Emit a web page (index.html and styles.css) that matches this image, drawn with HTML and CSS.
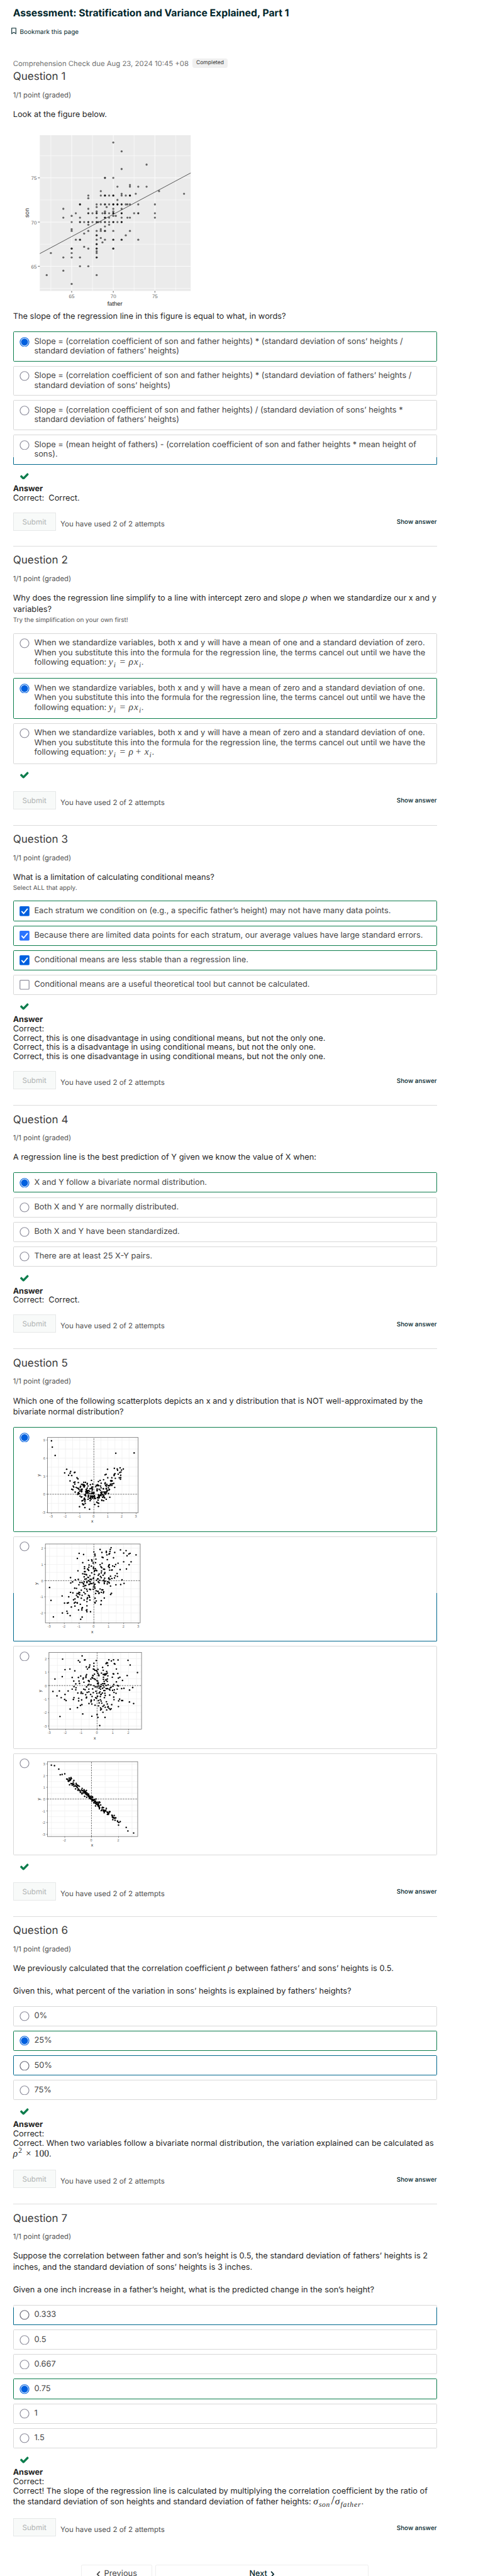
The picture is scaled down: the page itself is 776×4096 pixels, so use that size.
FILE: index.html
```html
<!DOCTYPE html>
<html lang="en">
<head>
<meta charset="utf-8">
<title>Assessment: Stratification and Variance Explained, Part 1</title>
<link rel="stylesheet" href="styles.css">
</head>
<body>
<svg class="defs" aria-hidden="true">
  <symbol id="radio" viewBox="0 0 28 28"><circle cx="14" cy="14" r="12.6" fill="#fff" stroke="currentColor" stroke-width="2.1"/></symbol>
  <symbol id="radio-on" viewBox="0 0 28 28"><circle cx="14" cy="14" r="12.7" fill="#fff" stroke="#0060df" stroke-width="2.1"/><circle cx="14" cy="14" r="10" fill="#0060df"/></symbol>
  <symbol id="box" viewBox="0 0 28 28"><rect x="1.1" y="1.1" width="25.8" height="25.8" rx="2.5" fill="#fff" stroke="#8f8f9d" stroke-width="2.2"/></symbol>
  <symbol id="box-on" viewBox="0 0 28 28"><rect width="28" height="28" rx="3" fill="currentColor"/><path d="M6.5 15l5 5.5L22 8" fill="none" stroke="#fff" stroke-width="3.4" stroke-linecap="round" stroke-linejoin="round"/></symbol>
  <symbol id="tick" viewBox="121 298 1550 1224"><path fill="currentColor" d="M1671 566q0 40-28 68l-724 724-136 136q-28 28-68 28t-68-28l-136-136-362-362q-28-28-28-68t28-68l136-136q28-28 68-28t68 28l294 295 656-657q28-28 68-28t68 28l136 136q28 28 28 68z"/></symbol>
</svg>

<main class="page">
  <header class="head">
    <h1 class="head__title">Assessment: Stratification and Variance Explained, Part 1</h1>
    <div class="bookmark">
      <svg class="bookmark__icon" viewBox="0 0 14 18"><path d="M1.2 1.2h11.6v15.2L7 12.6l-5.8 3.8z" fill="none" stroke="currentColor" stroke-width="1.9"/></svg>
      <span>Bookmark this page</span>
    </div>
    <div class="due"><span class="due__text">Comprehension Check due Aug 23, 2024 10:45 +08</span><span class="badge">Completed</span></div>
  </header>

  <section class="question question--first">
    <h2 class="question__title">Question 1</h2>
    <p class="points">1/1 point (graded)</p>
    <p class="prompt">Look at the figure below.</p>
    <svg class="figure" id="figure-heights" viewBox="50 370 500 490"></svg>
    <p class="prompt">The slope of the regression line in this figure is equal to what, in words?</p>
    <div class="options">
      <div class="option option--correct"><svg class="mark"><use href="#radio-on"/></svg><p>Slope = (correlation coefficient of son and father heights) * (standard deviation of sons’ heights /<br>standard deviation of fathers’ heights)</p></div>
      <div class="option"><svg class="mark"><use href="#radio"/></svg><p>Slope = (correlation coefficient of son and father heights) * (standard deviation of fathers’ heights /<br>standard deviation of sons’ heights)</p></div>
      <div class="option"><svg class="mark"><use href="#radio"/></svg><p>Slope = (correlation coefficient of son and father heights) / (standard deviation of sons’ heights *<br>standard deviation of fathers’ heights)</p></div>
      <div class="option option--trace trace-low"><svg class="mark"><use href="#radio"/></svg><p>Slope = (mean height of fathers) - (correlation coefficient of son and father heights * mean height of<br>sons).</p></div>
    </div>
    <svg class="status"><use href="#tick"/></svg>
    <div class="answer"><b>Answer</b><p>Correct:&nbsp; Correct.</p></div>
    <div class="actions"><span class="submit">Submit</span><span class="attempts">You have used 2 of 2 attempts</span><span class="show">Show answer</span></div>
  </section>

  <section class="question">
    <h2 class="question__title">Question 2</h2>
    <p class="points">1/1 point (graded)</p>
    <p class="prompt">Why does the regression line simplify to a line with intercept zero and slope <span class="math"><i>ρ</i></span> when we standardize our x and y<br>variables?</p>
    <p class="hint">Try the simplification on your own first!</p>
    <div class="options">
      <div class="option option--tall"><svg class="mark"><use href="#radio"/></svg><p>When we standardize variables, both x and y will have a mean of one and a standard deviation of zero.<br>When you substitute this into the formula for the regression line, the terms cancel out until we have the<br>following equation: <span class="math"><i>y</i><sub>i</sub><span class="op">=</span><i>ρx</i><sub>i</sub></span>.</p></div>
      <div class="option option--tall option--correct"><svg class="mark"><use href="#radio-on"/></svg><p>When we standardize variables, both x and y will have a mean of zero and a standard deviation of one.<br>When you substitute this into the formula for the regression line, the terms cancel out until we have the<br>following equation: <span class="math"><i>y</i><sub>i</sub><span class="op">=</span><i>ρx</i><sub>i</sub></span>.</p></div>
      <div class="option option--tall"><svg class="mark"><use href="#radio"/></svg><p>When we standardize variables, both x and y will have a mean of zero and a standard deviation of one.<br>When you substitute this into the formula for the regression line, the terms cancel out until we have the<br>following equation: <span class="math"><i>y</i><sub>i</sub><span class="op">=</span><i>ρ</i><span class="op op--plus">+</span><i>x</i><sub>i</sub></span>.</p></div>
    </div>
    <svg class="status"><use href="#tick"/></svg>
    <div class="actions actions--tight"><span class="submit">Submit</span><span class="attempts">You have used 2 of 2 attempts</span><span class="show">Show answer</span></div>
  </section>

  <section class="question">
    <h2 class="question__title">Question 3</h2>
    <p class="points">1/1 point (graded)</p>
    <p class="prompt">What is a limitation of calculating conditional means?</p>
    <p class="hint">Select ALL that apply.</p>
    <div class="options">
      <div class="option option--correct"><svg class="mark mark--box"><use href="#box-on"/></svg><p>Each stratum we condition on (e.g., a specific father’s height) may not have many data points.</p></div>
      <div class="option option--correct"><svg class="mark mark--box mark--hover"><use href="#box-on"/></svg><p>Because there are limited data points for each stratum, our average values have large standard errors.</p></div>
      <div class="option option--correct"><svg class="mark mark--box"><use href="#box-on"/></svg><p>Conditional means are less stable than a regression line.</p></div>
      <div class="option"><svg class="mark"><use href="#box"/></svg><p>Conditional means are a useful theoretical tool but cannot be calculated.</p></div>
    </div>
    <svg class="status"><use href="#tick"/></svg>
    <div class="answer"><b>Answer</b><p>Correct:<br>Correct, this is one disadvantage in using conditional means, but not the only one.<br>Correct, this is a disadvantage in using conditional means, but not the only one.<br>Correct, this is one disadvantage in using conditional means, but not the only one.</p></div>
    <div class="actions"><span class="submit">Submit</span><span class="attempts">You have used 2 of 2 attempts</span><span class="show">Show answer</span></div>
  </section>

  <section class="question">
    <h2 class="question__title">Question 4</h2>
    <p class="points">1/1 point (graded)</p>
    <p class="prompt">A regression line is the best prediction of Y given we know the value of X when:</p>
    <div class="options">
      <div class="option option--correct"><svg class="mark"><use href="#radio-on"/></svg><p>X and Y follow a bivariate normal distribution.</p></div>
      <div class="option"><svg class="mark"><use href="#radio"/></svg><p>Both X and Y are normally distributed.</p></div>
      <div class="option"><svg class="mark"><use href="#radio"/></svg><p>Both X and Y have been standardized.</p></div>
      <div class="option"><svg class="mark"><use href="#radio"/></svg><p>There are at least 25 X-Y pairs.</p></div>
    </div>
    <svg class="status"><use href="#tick"/></svg>
    <div class="answer"><b>Answer</b><p>Correct:&nbsp; Correct.</p></div>
    <div class="actions"><span class="submit">Submit</span><span class="attempts">You have used 2 of 2 attempts</span><span class="show">Show answer</span></div>
  </section>

  <section class="question">
    <h2 class="question__title">Question 5</h2>
    <p class="points">1/1 point (graded)</p>
    <p class="prompt">Which one of the following scatterplots depicts an x and y distribution that is NOT well-approximated by the<br>bivariate normal distribution?</p>
    <div class="options">
      <div class="option option--plot option--correct plot-a"><svg class="mark"><use href="#radio-on"/></svg><svg class="plot" id="plot-a" viewBox="0 0 320 260"></svg></div>
      <div class="option option--plot option--trace trace-mid plot-b"><svg class="mark"><use href="#radio"/></svg><svg class="plot" id="plot-b" viewBox="0 290 320 280"></svg></div>
      <div class="option option--plot plot-c"><svg class="mark"><use href="#radio"/></svg><svg class="plot" id="plot-c" viewBox="0 0 320 260"></svg></div>
      <div class="option option--plot plot-d"><svg class="mark"><use href="#radio"/></svg><svg class="plot" id="plot-d" viewBox="0 300 320 260"></svg></div>
    </div>
    <svg class="status"><use href="#tick"/></svg>
    <div class="actions actions--tight"><span class="submit">Submit</span><span class="attempts">You have used 2 of 2 attempts</span><span class="show">Show answer</span></div>
  </section>

  <section class="question">
    <h2 class="question__title">Question 6</h2>
    <p class="points">1/1 point (graded)</p>
    <p class="prompt">We previously calculated that the correlation coefficient <span class="math"><i>ρ</i></span> between fathers’ and sons’ heights is 0.5.<br><br>Given this, what percent of the variation in sons’ heights is explained by fathers’ heights?</p>
    <div class="options">
      <div class="option"><svg class="mark"><use href="#radio"/></svg><p>0%</p></div>
      <div class="option option--correct"><svg class="mark"><use href="#radio-on"/></svg><p>25%</p></div>
      <div class="option option--hover"><svg class="mark"><use href="#radio"/></svg><p>50%</p></div>
      <div class="option"><svg class="mark"><use href="#radio"/></svg><p>75%</p></div>
    </div>
    <svg class="status"><use href="#tick"/></svg>
    <div class="answer"><b>Answer</b><p>Correct:<br>Correct. When two variables follow a bivariate normal distribution, the variation explained can be calculated as</p><p class="formula"><span class="math"><i>ρ</i><sup>2</sup><span class="op">×</span>100</span>.</p></div>
    <div class="actions"><span class="submit">Submit</span><span class="attempts">You have used 2 of 2 attempts</span><span class="show">Show answer</span></div>
  </section>

  <section class="question">
    <h2 class="question__title">Question 7</h2>
    <p class="points">1/1 point (graded)</p>
    <p class="prompt">Suppose the correlation between father and son’s height is 0.5, the standard deviation of fathers’ heights is 2<br>inches, and the standard deviation of sons’ heights is 3 inches.<br><br>Given a one inch increase in a father’s height, what is the predicted change in the son’s height?</p>
    <div class="options">
      <div class="option option--trace trace-high"><svg class="mark mark--dark"><use href="#radio"/></svg><p>0.333</p></div>
      <div class="option"><svg class="mark"><use href="#radio"/></svg><p>0.5</p></div>
      <div class="option"><svg class="mark"><use href="#radio"/></svg><p>0.667</p></div>
      <div class="option option--correct"><svg class="mark"><use href="#radio-on"/></svg><p>0.75</p></div>
      <div class="option"><svg class="mark"><use href="#radio"/></svg><p>1</p></div>
      <div class="option"><svg class="mark"><use href="#radio"/></svg><p>1.5</p></div>
    </div>
    <svg class="status"><use href="#tick"/></svg>
    <div class="answer"><b>Answer</b><p>Correct:<br>Correct! The slope of the regression line is calculated by multiplying the correlation coefficient by the ratio of</p><p class="formula formula--sigma">the standard deviation of son heights and standard deviation of father heights: <span class="math"><i>σ</i><sub>son</sub><span class="slash">/</span><i>σ</i><sub class="wide">father</sub></span>.</p></div>
    <div class="actions"><span class="submit">Submit</span><span class="attempts">You have used 2 of 2 attempts</span><span class="show">Show answer</span></div>
  </section>

  <nav class="pager">
    <span class="pager__item pager__item--prev"><svg class="chevron" viewBox="0 0 12 18"><path d="M10 1.5L3 9l7 7.5" fill="none" stroke="currentColor" stroke-width="3"/></svg>Previous</span>
    <span class="pager__item pager__item--next">Next<svg class="chevron" viewBox="0 0 12 18"><path d="M2 1.5L9 9l-7 7.5" fill="none" stroke="currentColor" stroke-width="3"/></svg></span>
  </nav>
</main>
<script src="charts.js"></script>
</body>
</html>
```
FILE: styles.css
```css
html {
  font-size: 5.7135px;
}

* {
  box-sizing: border-box;
}

body {
  margin: 0;
  width: 776px;
  height: 4096px;
  overflow: hidden;
  background: #fff;
  color: #1f1f1f;
  font-family: Inter, "Liberation Sans", sans-serif;
  font-size: 2.246rem;
  text-rendering: geometricPrecision;
}

h1, h2, p {
  margin: 0;
  font-weight: 400;
}

p, .due, .actions, .bookmark {
  white-space: nowrap;
}

.defs {
  display: block;
  width: 0;
  height: 0;
}

.page {
  margin-left: 3.62rem;
  width: 117.95rem;
}

.head__title {
  padding-top: 1.76rem;
  line-height: 4rem;
  font-size: 2.755rem;
  font-weight: 700;
  color: #00262b;
}

.bookmark {
  display: flex;
  align-items: center;
  gap: 0.9rem;
  height: 3rem;
  margin: 1.6rem 0 0 -0.4rem;
  font-size: 1.742rem;
  color: #00262b;
}

.bookmark__icon {
  width: 1.4rem;
  height: 1.85rem;
  margin-top: -0.3rem;
}

.due {
  display: flex;
  align-items: center;
  gap: 1rem;
  height: 3rem;
  margin-top: 5.75rem;
  font-size: 1.988rem;
  color: #707070;
}

.badge {
  width: 9.9rem;
  height: 2.5rem;
  border-radius: 0.6rem;
  background: #f0f0f0;
  color: #333;
  text-align: center;
  font-size: 1.496rem;
  line-height: 2.5rem;
}

.question {
  border-top: 1px solid #dcdcdc;
  padding-top: 2rem;
  padding-bottom: 4.35rem;
}

.question--first {
  border-top: 0;
  padding-top: 0.3rem;
  padding-bottom: 4.17rem;
}

.question__title {
  height: 4rem;
  line-height: 4rem;
  font-size: 2.98rem;
  color: #3c3c3c;
}

.points {
  margin-top: 1.55rem;
  line-height: 3rem;
  font-size: 1.98rem;
  color: #555;
}

.prompt {
  margin-top: 2.45rem;
  line-height: 3.13rem;
}

.figure {
  display: block;
  width: 50rem;
  height: 49rem;
  margin-left: 1.38rem;
  margin-top: 3.46rem;
}

.figure + .prompt {
  margin-top: 0.7rem;
}

.hint {
  line-height: 2.6rem;
  font-size: 1.743rem;
  color: #555;
}

.options {
  display: flex;
  flex-direction: column;
  gap: 1.24rem;
  margin-top: 2.45rem;
}

.hint + .options {
  margin-top: 2.25rem;
}

.option {
  position: relative;
  display: flex;
  align-items: flex-start;
  padding: 1.3rem 0 1.22rem 1.6rem;
  border: 1px solid #d8d8d8;
  border-radius: 0.3rem;
  color: #454545;
  line-height: 2.73rem;
}

.option--tall {
  height: 11.3rem;
  line-height: 2.7rem;
}

.option--correct {
  border-color: #0d7d4d;
}

.option--hover {
  border-color: #00688d;
}

.option--trace::after {
  content: "";
  position: absolute;
  left: -1px;
  right: -1px;
  bottom: -1px;
  border: 1px solid #00688d;
  border-top: 0;
  border-radius: 0 0 0.3rem 0.3rem;
}

.trace-low::after {
  height: 1.8rem;
}

.trace-mid::after {
  height: 13.3rem;
}

.trace-high::after {
  height: 4.8rem;
}

.mark {
  flex: none;
  width: 2.8rem;
  height: 2.75rem;
  margin-right: 1.33rem;
  color: #8f8f9d;
}

.option--hover .mark,
.mark--dark {
  color: #6a6a78;
}

.mark--box {
  color: #0060df;
}

.mark--hover {
  color: #2b74ff;
}

.plot {
  flex: none;
  width: 32rem;
  height: 26rem;
  margin-left: -0.53rem;
}

.plot-a { height: 29.1rem; }
.plot-b { height: 29.3rem; }
.plot-c { height: 28.66rem; }
.plot-d { height: 28.35rem; }
.plot-a .plot { margin-top: 0.25rem; }
.plot-b .plot { height: 28rem; margin-top: -1.1rem; }
.plot-c .plot { margin-top: -0.65rem; }
.plot-d .plot { margin-top: -0.55rem; }

.status {
  display: block;
  width: 2.4rem;
  height: 1.9rem;
  margin: 2.25rem 0 1.55rem 2rem;
  color: #0d7d4d;
}

.answer {
  line-height: 2.62rem;
}

.answer b {
  display: block;
  font-size: 2.207rem;
  font-weight: 700;
}

.formula {
  height: 3.4rem;
  line-height: 3.3rem;
}

.formula--sigma {
  height: 3.5rem;
  line-height: 3rem;
}

.actions {
  display: flex;
  align-items: center;
  height: 5.1rem;
  margin-top: 2.43rem;
}

.actions--tight {
  margin-top: 3.4rem;
}

.submit {
  width: 11.9rem;
  height: 5.1rem;
  border: 1px solid #e6e8e8;
  background: #f8faf9;
  color: #b0b3b3;
  text-align: center;
  font-size: 2.04rem;
  line-height: 5rem;
}

.attempts {
  margin: 1.2rem 0 0 1.3rem;
  font-size: 2.024rem;
  color: #4f4f4f;
}

.show {
  margin-left: auto;
  padding-top: 0.3rem;
  font-size: 1.74rem;
  font-weight: 500;
  color: #00262b;
}

.math {
  font-family: "Liberation Serif", serif;
  font-size: 2.7rem;
  line-height: 1rem;
}

.math i {
  letter-spacing: 0.2rem;
}

.math sub,
.math sup {
  font-size: 0.75em;
  font-style: italic;
  letter-spacing: 0.1rem;
  line-height: 0;
}

.math sup {
  font-style: normal;
  letter-spacing: 0;
}

.math .wide {
  letter-spacing: 0.16rem;
}

.op {
  margin: 0 0.9rem 0 1.05rem;
}

.op--plus {
  margin: 0 0.9rem 0 0.5rem;
}

.slash {
  margin: 0 0.1rem 0 0.3rem;
  font-size: 1.3em;
  line-height: 0;
}

.pager {
  display: flex;
  gap: 1rem;
  margin: 3.4rem 0 0 19rem;
}

.pager__item {
  display: flex;
  justify-content: center;
  align-items: center;
  gap: 1rem;
  height: 5.4rem;
  border: 1px solid #eee;
  border-radius: 0.4rem;
  color: #454545;
}

.pager__item--prev {
  width: 19.7rem;
}

.pager__item--next {
  width: 59.3rem;
  color: #00262b;
  font-size: 2.207rem;
  font-weight: 500;
}

.chevron {
  width: 1.2rem;
  height: 1.8rem;
}
```
FILE: charts.js
```js
const NS = "http://www.w3.org/2000/svg";

function add(parent, tag, attrs, text) {
  const el = document.createElementNS(NS, tag);
  for (const key in attrs) el.setAttribute(key, attrs[key]);
  if (text !== undefined) el.textContent = text;
  parent.appendChild(el);
}

function label(parent, x, y, text, size, fill, anchor, rotate) {
  const attrs = { x, y, "font-size": size, fill, "text-anchor": anchor, "font-family": "Liberation Sans, Arial, sans-serif" };
  if (rotate) attrs.transform = `rotate(-90 ${x} ${y})`;
  add(parent, "text", attrs, text);
}

const pairs = (s) => s.trim().split(/\s+/).map((p) => p.split(",").map(Number));

/* Father and son heights; a third value is the number of families at that point. */
const heights = pairs(`
70,79 71,78 74,76.5 71,76 69,75,2 70,75 72,74.2 72,74 70.5,74 73,74 74,74 68.5,73.5 75.5,73.5
71,73.2 72.7,73.2 78.5,73.2 67,73 68.5,73 69,73,3 69.5,73 70,73,3 71,73 71.5,73 72,73,3 67,72.7
70.5,72.5 66,72,3 68,72 68.5,72 69,72,2 69.5,72 70,72,4 70.5,72,3 71,72,2 71.5,72 71.7,72 72,72
73,72 75,72 68,71.7 69.2,71.7 64,71.5 67,71.5 70,71.5 71,71.5 68,71.2 69,71.2 70,71.2 65.5,71
67,71,2 67.5,71 68,71,2 68.7,71 69,71,2 69.5,71 70,71,4 71,71,3 72.5,71 73,71,2 75,71 65,70.7
70,70.7 70.3,70.7 64,70.5 66,70.5 68,70.5 69,70.5,3 69.5,70.5 71,70.5 71.7,70.5 72,70.5 75,70.5
65,70 66,70,2 66.5,70 67,70,2 67.5,70 68,70,2 68.2,70 68.5,70 69,70,2 69.5,70 70,70,3 70.5,70
71,70,3 67,69.7 69.5,69.7 69,69.5 65,69.2 68.5,69.2 65,69 67,69 68,69 68.5,69 69,69,2 70,69 72,69
66.5,68.7 68,68.5,2 71.5,68.5 68.5,68.2 65.5,68 66,68,2 68,68 69,68 70,68,2 71,68,2 73,68 68.7,67.7
68,67.5,2 66.5,67.2 65,67,2 67,67 68,67,2 70,67,2 68,66.7 62.5,66.5 65,66.5 68,66.5 64,66 65,66
66,66 68,66,2 66,65 67,65 64,64.5 62,64 68,64 65,63`);

(function drawHeights() {
  const svg = document.getElementById("figure-heights");
  const X = (v) => 198.7 + (v - 65) * 23.17;
  const Y = (v) => 618.7 - (v - 70) * 24.6;
  add(svg, "rect", { x: 110, y: 377, width: 420, height: 433.5, fill: "#ebebeb" });
  const line = (x1, y1, x2, y2, stroke, w) => add(svg, "line", { x1, y1, x2, y2, stroke, "stroke-width": w });
  [62.5, 65, 67.5, 70, 72.5, 75, 77.5].forEach((v) => line(X(v), 377, X(v), 810.5, "#fff", v % 5 ? 1 : 1.5));
  [62.5, 65, 67.5, 70, 72.5, 75, 77.5].forEach((v) => line(110, Y(v), 530, Y(v), "#fff", v % 5 ? 1 : 1.5));
  heights.forEach(([f, s, n = 1]) =>
    add(svg, "circle", { cx: X(f), cy: Y(s), r: 2.9, fill: "#000", "fill-opacity": 1 - Math.pow(0.42, n) }));
  line(110, 706.5, 530, 482, "#222", 1.3);
  [65, 70, 75].forEach((v) => {
    line(X(v), 810.5, X(v), 815, "#333", 1.4);
    line(105, Y(v), 110, Y(v), "#333", 1.4);
    label(svg, X(v), 831, v, 14, "#666", "middle");
    label(svg, 101.5, Y(v) + 6, v, 14, "#666", "end");
  });
  label(svg, 319, 852, "father", 16.5, "#222", "middle");
  label(svg, 79.5, 593, "son", 16.5, "#222", "middle", true);
})();

const plots = {
  "plot-a": {
    frame: [128, 33, 886, 620], origin: [516, 475], name: [503, 698, 58, 327],
    xt: { "-3": 162, "-2": 279, "-1": 398, 0: 516, 1: 633, 2: 751, 3: 869 },
    yt: { 9: 53, 6: 194, 3: 334, 0: 475, "-3": 617 },
    gx: [220, 338, 457, 575, 692, 810], gy: [123, 264, 405, 546],
    pts: `162,59 169,108 193,173 699,155 852,153 289,280 272,309 322,298 317,311 305,327 331,329 353,306 358,304 375,347 383,355 317,371 630,280 687,273 735,269 711,278 714,288 762,278 747,287 609,324 618,320 732,306 742,302 692,315 686,321 685,329 719,318 740,327 632,347 666,347 695,351 728,347 740,345 738,358 496,367 597,362 568,367 554,376 577,389 656,370 663,369 669,371 661,374 611,386 609,393 350,383 358,380 357,396 386,384 432,382 446,382 461,390 460,397 487,401 506,396 413,398 424,398 430,404 434,402 428,408 440,407 436,413 434,419 467,411 343,411 348,419 368,422 379,427 387,430 392,438 405,413 402,422 331,436 341,440 360,458 536,405 548,400 546,408 532,416 557,408 572,411 576,425 560,436 543,434 543,442 543,449 570,444 594,431 596,434 584,457 583,463 614,406 624,398 620,412 635,408 643,409 652,407 654,397 661,395 672,394 682,390 666,407 637,425 620,429 619,434 646,437 642,442 628,443 626,450 690,422 408,440 415,436 418,436 398,451 411,450 416,450 413,456 388,462 393,470 384,465 381,476 390,472 452,437 455,443 461,427 452,450 459,449 466,447 474,446 448,455 453,457 458,458 463,456 468,461 455,464 461,468 450,466 476,470 481,454 484,432 495,430 504,434 498,420 505,419 502,443 500,458 491,470 500,470 509,465 516,461 517,466 515,471 507,470 444,476 440,481 445,483 448,488 401,490 411,498 415,495 470,484 471,490 469,497 488,488 492,492 497,490 503,488 508,491 513,492 520,486 522,492 517,497 503,497 490,500 480,507 487,506 492,514 467,514 485,525 503,505 518,508 524,504 530,508 438,506 435,510 434,518 444,518 422,524 417,527 441,532 422,550 428,557 431,555 444,547 396,572 441,579 480,592 523,555 540,537 549,543 556,545 554,570 551,521 551,505 560,500 560,502 546,501 553,480 559,482 561,490 556,492 571,480 575,486 577,472 574,460 578,466 585,476 591,481 600,457 612,457 618,460 617,467 604,466 612,474 625,455 638,469 599,483 596,493 589,499 601,497 606,503 619,514 582,520 583,523 597,525 649,499`
  },
  "plot-b": {
    frame: [111, 861, 903, 1476], origin: [516, 1147], name: [503, 1558, 38, 1170],
    xt: { "-3": 146, "-2": 269, "-1": 393, 0: 516, 1: 640, 2: 765, 3: 888 },
    yt: { 2: 894, 1: 1020, 0: 1147, "-1": 1273, "-2": 1399 },
    gx: [208, 331, 455, 578, 703, 826], gy: [957, 1083, 1210, 1336, 1462],
    pts: `660,890 568,904 653,904 620,918 650,920 583,927 620,927 690,927 738,907 785,913 765,932 818,934 808,939 868,946 793,953 648,935 643,941 625,946 393,934 430,943 516,923 525,941 526,953 378,974 585,964 593,967 680,969 628,983 533,979 471,988 498,985 501,994 510,1009 530,1007 423,1007 585,1011 568,1023 765,1000 827,1000 810,1023 718,1011 698,1021 688,1037 673,1032 645,1023 640,1028 638,1037 645,1045 495,1034 476,1025 474,1042 438,1039 438,1053 465,1056 466,1060 473,1067 513,1042 513,1053 528,1053 575,1039 582,1046 580,1072 597,1057 605,1058 735,1061 788,1056 668,1063 665,1065 648,1065 383,1070 438,1077 443,1077 498,1086 523,1068 520,1074 534,1065 540,1069 521,1098 578,1086 608,1084 605,1093 423,1093 438,1096 450,1098 455,1102 483,1109 435,1117 466,1120 470,1122 553,1105 560,1095 593,1105 571,1114 578,1123 710,1091 695,1109 713,1114 655,1112 688,1126 666,1130 641,1125 640,1132 650,1137 606,1128 321,1123 361,1140 386,1137 338,1156 323,1165 400,1161 441,1135 453,1133 485,1137 495,1137 511,1130 513,1126 538,1144 548,1133 551,1133 565,1144 470,1147 475,1149 458,1156 458,1162 435,1156 417,1161 428,1170 431,1175 485,1156 513,1165 490,1170 500,1170 480,1174 475,1177 553,1156 560,1163 600,1142 593,1147 610,1151 603,1158 603,1170 630,1156 640,1158 645,1165 628,1172 751,1140 768,1168 740,1177 700,1179 655,1189 391,1179 428,1191 440,1187 448,1184 525,1175 518,1182 513,1196 523,1196 525,1207 510,1214 146,1200 356,1205 371,1207 411,1221 440,1207 456,1214 480,1214 488,1216 461,1228 568,1212 583,1219 591,1219 535,1226 548,1230 551,1231 578,1238 598,1233 595,1242 558,1247 560,1242 531,1247 656,1254 663,1245 603,1282 578,1303 575,1333 321,1238 341,1242 391,1238 398,1240 433,1238 443,1249 376,1247 388,1249 398,1256 371,1261 418,1261 251,1266 306,1273 380,1272 384,1275 411,1284 471,1261 478,1266 480,1277 463,1280 460,1289 458,1310 483,1298 435,1298 526,1284 536,1305 526,1317 526,1321 158,1301 358,1289 346,1296 361,1315 353,1322 376,1319 378,1322 271,1322 294,1322 303,1319 403,1331 358,1345 328,1352 458,1343 420,1357 416,1363 416,1375 388,1375 458,1374 453,1378 458,1389 488,1389 291,1385 296,1401 253,1399 318,1420 178,1429 418,1431 406,1448`
  },
  "plot-c": {
    frame: [141, 27, 914, 625], origin: [543, 285], name: [523, 706, 70, 327],
    xt: { "-3": 146, "-2": 280, "-1": 411, 0: 543, 1: 675, 2: 806 },
    yt: { 2: 75, 1: 180, 0: 285, "-1": 388, "-2": 495, "-3": 600 },
    gx: [212, 346, 477, 609, 740, 872], gy: [128, 232, 336, 442, 547],
    pts: `418,54 255,79 387,90 399,102 438,86 443,84 536,90 516,111 516,134 482,125 453,140 479,140 474,145 462,156 316,156 275,161 357,170 511,156 517,158 524,166 536,168 550,159 543,177 641,84 680,84 718,86 662,93 801,88 819,125 623,106 630,109 618,114 687,114 692,118 633,129 589,143 594,166 704,156 880,184 794,207 677,193 682,195 716,191 579,188 623,175 628,188 550,190 556,202 558,208 521,196 594,198 602,198 608,195 614,201 618,193 606,203 616,197 633,209 670,220 596,220 455,200 450,211 450,222 406,211 387,222 335,222 252,216 191,234 348,250 392,250 428,225 426,234 433,259 396,268 365,272 507,205 509,208 501,222 506,227 491,234 519,232 528,238 470,247 475,247 477,254 541,247 548,250 553,263 546,270 553,272 596,236 616,240 618,243 628,234 628,252 602,252 589,270 601,269 606,271 577,277 721,227 733,220 755,245 704,256 682,277 635,279 594,284 618,284 491,279 475,275 467,282 516,286 350,293 367,302 455,295 528,295 543,295 557,288 575,291 570,295 560,305 572,313 589,306 601,297 675,290 660,298 653,303 712,284 721,288 711,313 840,300 767,306 748,309 814,320 643,313 650,320 672,322 687,318 618,308 625,310 630,308 174,331 228,327 301,327 335,313 365,318 431,313 443,317 474,313 506,311 474,334 460,338 411,336 409,345 423,347 382,343 511,340 533,329 541,345 567,334 560,343 587,343 599,324 608,324 608,345 684,338 701,345 275,354 208,365 243,379 350,379 448,356 489,354 574,354 577,353 501,370 548,368 545,370 570,370 611,363 648,359 682,375 604,379 272,393 284,402 345,393 389,384 389,404 455,375 453,381 531,379 537,384 494,398 492,412 519,397 414,397 494,403 570,395 577,406 555,402 684,395 731,391 723,404 748,402 756,402 813,413 848,425 318,468 379,457 404,440 416,434 475,425 499,429 526,438 560,420 582,422 621,411 628,429 555,443 601,438 592,447 611,454 665,434 635,448 633,454 643,463 572,459 579,468 572,475 623,475 653,472 660,465 721,449 592,493 233,526 423,506 499,524 543,511 550,533 609,533 565,597`
  },
  "plot-d": {
    frame: [128, 880, 882, 1463], origin: [496, 1171], name: [501, 1542, 58, 1172],
    xt: { "-2": 273, 0: 496, 2: 722 },
    yt: { 3: 898, 2: 989, 1: 1080, 0: 1171, "-1": 1264, "-2": 1354, "-3": 1446 },
    gx: [161, 385, 610, 835], gy: [944, 1035, 1126, 1218, 1309, 1400],
    pts: `161,907 187,911 223,938 235,982 251,980 273,975 289,1015 297,1018 310,1008 325,1004 329,1012 318,1015 322,1020 312,1022 306,1030 301,1030 306,1034 316,1027 349,1026 344,1039 313,1060 325,1050 332,1052 340,1052 349,1054 335,1063 346,1060 368,1049 370,1058 378,1063 385,1067 394,1072 350,1072 360,1068 367,1072 374,1075 378,1082 363,1092 386,1092 391,1097 382,1102 396,1106 406,1108 418,1088 413,1099 403,1119 421,1106 428,1108 434,1098 438,1107 444,1112 454,1104 448,1114 436,1115 427,1123 417,1131 416,1124 434,1122 443,1120 452,1122 459,1124 445,1130 452,1134 460,1131 468,1133 439,1150 459,1140 466,1142 473,1141 456,1157 471,1150 478,1148 472,1133 476,1156 482,1160 488,1162 480,1166 486,1168 493,1168 490,1150 503,1152 506,1157 497,1160 492,1172 499,1174 505,1172 503,1180 500,1187 510,1182 516,1178 522,1174 534,1171 518,1186 524,1190 515,1200 520,1200 530,1187 532,1195 537,1200 544,1196 530,1205 536,1210 541,1212 530,1225 553,1196 563,1194 565,1199 548,1209 555,1208 551,1216 556,1220 549,1223 560,1225 556,1231 562,1235 573,1217 562,1247 563,1240 588,1235 585,1241 596,1238 577,1262 583,1255 594,1256 600,1258 608,1262 616,1257 620,1244 596,1266 604,1269 602,1278 612,1266 626,1271 631,1277 644,1270 651,1270 642,1280 636,1284 629,1291 638,1291 667,1297 671,1303 686,1299 670,1311 675,1317 682,1314 686,1321 694,1319 699,1318 674,1332 693,1336 713,1342 716,1348 725,1354 736,1347 722,1374 786,1392 800,1420 848,1436`
  }
};

/* Plot coordinates are kept on a fine grid: 3 units per pixel across, 2.8 down. */
for (const id in plots) {
  const p = plots[id];
  const svg = document.getElementById(id);
  const X = (v) => v / 3;
  const Y = (v) => v / 2.8;
  const [l, t, r, b] = p.frame;
  const line = (x1, y1, x2, y2, stroke, w, dash) =>
    add(svg, "line", { x1: X(x1), y1: Y(y1), x2: X(x2), y2: Y(y2), stroke, "stroke-width": w, "stroke-dasharray": dash || "none" });
  p.gx.concat(Object.values(p.xt)).forEach((x) => line(x, t, x, b, "#ededed", 1.2));
  p.gy.concat(Object.values(p.yt)).forEach((y) => line(l, y, r, y, "#ededed", 1.2));
  pairs(p.pts).forEach(([x, y]) => add(svg, "circle", { cx: X(x), cy: Y(y), r: 2.1, fill: "#000" }));
  line(p.origin[0], b, p.origin[0], t, "#333", 1.2, "4 3");
  line(l, p.origin[1], r, p.origin[1], "#333", 1.2, "4 3");
  add(svg, "rect", { x: X(l), y: Y(t), width: X(r - l), height: Y(b - t), fill: "none", stroke: "#555", "stroke-width": 1.2 });
  for (const k in p.xt) {
    line(p.xt[k], b, p.xt[k], b + 9, "#444", 1.1);
    label(svg, X(p.xt[k]) - (k < 0 ? 1 : 0.6), Y(b) + 13.5, k, 9.8, "#666", "middle");
  }
  for (const k in p.yt) {
    line(l - 9, p.yt[k], l, p.yt[k], "#444", 1.1);
    label(svg, X(l - 18), Y(p.yt[k]) + 4.2, k, 9.8, "#666", "end");
  }
  label(svg, X(p.name[0]), Y(p.name[1]), "x", 12, "#222", "middle");
  label(svg, X(p.name[2]) + 3, Y(p.name[3]), "y", 12, "#222", "middle", true);
}
```
